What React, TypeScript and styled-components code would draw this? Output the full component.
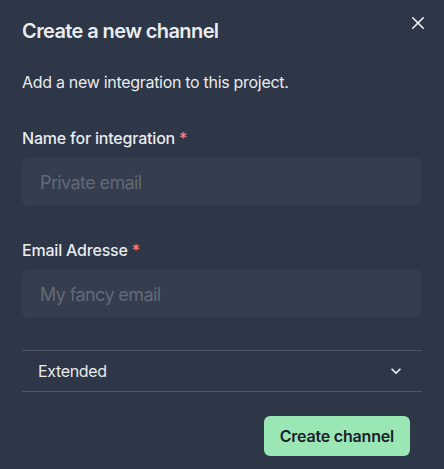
import React from "react";
import styled, { createGlobalStyle } from "styled-components";

const Global = createGlobalStyle`
  html, body { margin: 0; padding: 0; background: #2d3748; }
  body { font-family: Inter, "Noto Sans", sans-serif; color: rgba(255,255,255,0.92); -webkit-font-smoothing: antialiased; }
  * { box-sizing: border-box; }
`;

const Modal = styled.section`
  position: relative;
  width: 444px;
  min-height: 469px;
  background: #2d3748;
  display: flex;
  flex-direction: column;
`;

const Header = styled.header`
  padding: 16px 22px;
  font-size: 20px;
  line-height: 30px;
  font-weight: 600;
  letter-spacing: -0.6px;
`;

const CloseButton = styled.button`
  position: absolute;
  top: 7px;
  right: 10px;
  width: 32px;
  height: 32px;
  border: none;
  background: transparent;
  color: rgba(255,255,255,0.92);
  display: flex;
  align-items: center;
  justify-content: center;
  padding: 0;
  border-radius: 6px;
`;

const Body = styled.div`
  padding: 8px 22px;
  display: flex;
  flex-direction: column;
`;

const Intro = styled.p`
  margin: 0 0 32px;
  font-size: 16px;
  line-height: 24px;
  letter-spacing: -0.3px;
`;

const Field = styled.div`
  display: flex;
  flex-direction: column;
  margin-bottom: 32px;
`;

const Label = styled.label`
  font-size: 16px;
  line-height: 24px;
  font-weight: 500;
  letter-spacing: -0.2px;
  margin-bottom: 8px;
`;

const Star = styled.span`
  color: #fc8181;
  margin-left: 4px;
`;

const Input = styled.input`
  height: 48px;
  width: 100%;
  border: 2px solid transparent;
  border-radius: 6px;
  background: rgba(255,255,255,0.04);
  padding: 0 16px;
  font-family: inherit;
  font-size: 18px;
  letter-spacing: -0.6px;
  color: rgba(255,255,255,0.92);
  outline: none;
  &::placeholder { color: rgba(255,255,255,0.24); }
`;

const Accordion = styled.div`
  border-top: 1px solid rgba(255,255,255,0.16);
  border-bottom: 1px solid rgba(255,255,255,0.16);
`;

const AccordionButton = styled.button`
  width: 100%;
  height: 40px;
  display: flex;
  align-items: center;
  justify-content: space-between;
  padding: 8px 16px;
  background: transparent;
  border: none;
  font-family: inherit;
  font-size: 16px;
  letter-spacing: -0.35px;
  color: rgba(255,255,255,0.92);
`;

const Footer = styled.footer`
  display: flex;
  justify-content: flex-end;
  padding: 16px 34px 16px 22px;
`;

const PrimaryButton = styled.button`
  height: 40px;
  padding: 0 16px;
  border: none;
  border-radius: 6px;
  background: #9ae6b4;
  color: #1a202c;
  font-family: inherit;
  font-size: 16px;
  font-weight: 600;
  letter-spacing: -0.2px;
`;

export default function App() {
  return (
    <>
      <Global />
      <Modal>
        <Header>Create a new channel</Header>
        <CloseButton aria-label="Close">
          <svg width="12" height="12" viewBox="0 0 24 24">
            <path
              fill="currentColor"
              d="M.439,21.44a1.5,1.5,0,0,0,2.122,2.121L11.823,14.3a.25.25,0,0,1,.354,0l9.262,9.263a1.5,1.5,0,1,0,2.122-2.121L14.3,12.177a.25.25,0,0,1,0-.354l9.263-9.262A1.5,1.5,0,0,0,21.439.44L12.177,9.7a.25.25,0,0,1-.354,0L2.561.44A1.5,1.5,0,0,0,.439,2.561L9.7,11.823a.25.25,0,0,1,0,.354Z"
            />
          </svg>
        </CloseButton>
        <Body>
          <Intro>Add a new integration to this project.</Intro>
          <Field>
            <Label>
              Name for integration<Star>*</Star>
            </Label>
            <Input placeholder="Private email" />
          </Field>
          <Field>
            <Label>
              Email Adresse<Star>*</Star>
            </Label>
            <Input placeholder="My fancy email" />
          </Field>
          <Accordion>
            <AccordionButton>
              <span>Extended</span>
              <svg width="20" height="20" viewBox="0 0 24 24">
                <path fill="currentColor" d="M16.59 8.59L12 13.17 7.41 8.59 6 10l6 6 6-6z" />
              </svg>
            </AccordionButton>
          </Accordion>
        </Body>
        <Footer>
          <PrimaryButton>Create channel</PrimaryButton>
        </Footer>
      </Modal>
    </>
  );
}
